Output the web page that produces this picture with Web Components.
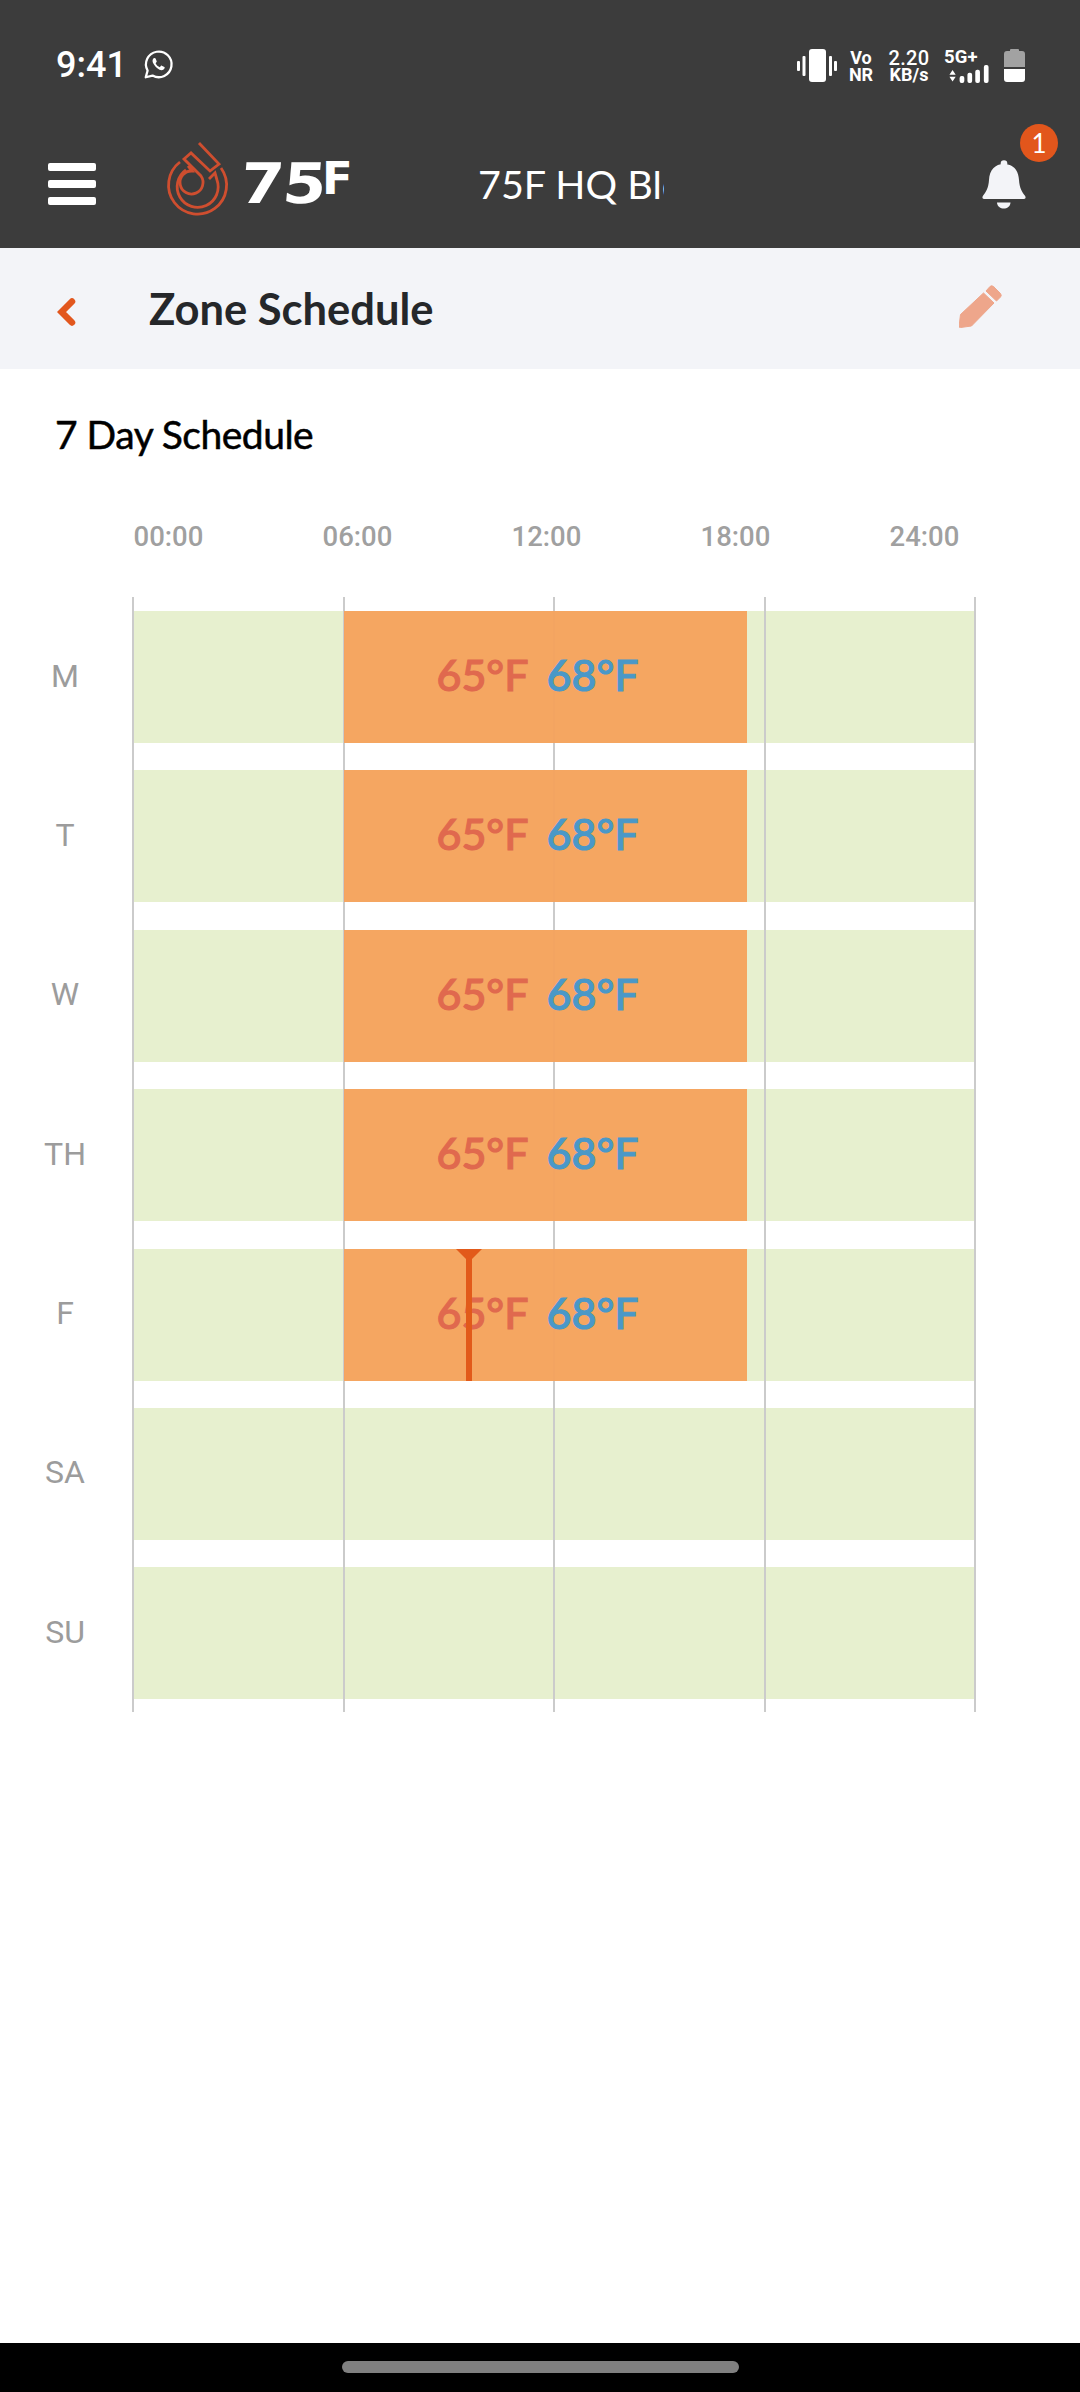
<!DOCTYPE html>
<html lang="en">
<head>
<meta charset="utf-8">
<title>Zone Schedule</title>
<style>
  html, body { margin: 0; padding: 0; background: #fff; }
  body { width: 1080px; height: 2392px; display: flex; flex-direction: column; overflow: hidden; font-family: Lato, sans-serif; }
</style>
</head>
<body>
<zs-status-bar time="9:41"></zs-status-bar>
<zs-app-header building="75F HQ Bldg" alerts="1"></zs-app-header>
<zs-page-title>Zone Schedule</zs-page-title>
<zs-week-schedule heading="7 Day Schedule">
  <zs-day-row day="M" heat="65°F" cool="68°F"></zs-day-row>
  <zs-day-row day="T" heat="65°F" cool="68°F"></zs-day-row>
  <zs-day-row day="W" heat="65°F" cool="68°F"></zs-day-row>
  <zs-day-row day="TH" heat="65°F" cool="68°F"></zs-day-row>
  <zs-day-row day="F" heat="65°F" cool="68°F" now="39.9"></zs-day-row>
  <zs-day-row day="SA"></zs-day-row>
  <zs-day-row day="SU"></zs-day-row>
</zs-week-schedule>
<zs-nav-bar></zs-nav-bar>

<script>
/* Shared base: every element just renders a string into an open shadow root */
class ZsElement extends HTMLElement {
  constructor() {
    super();
    this.attachShadow({ mode: 'open' });
  }
  connectedCallback() { this.shadowRoot.innerHTML = this.render(); }
}

class ZsStatusBar extends ZsElement {
  render() {
    return `<style>
:host { display: flex; flex: none; height: 120px; box-sizing: border-box; padding: 48px 55px 0 56px; background: #3c3c3c; color: #fff; font-family: Roboto, sans-serif; }
.time { font-size: 36px; font-weight: 500; line-height: 34px; width: 86px; }
.wa { width: 32px; height: 32px; margin-top: 1px; }
.right { display: flex; margin-left: auto; height: 34px; margin-top: 1px; }
.stack { display: flex; flex-direction: column; align-items: center; font-weight: 700; justify-content: space-between; }
.vo { width: 26px; margin: 0 15px 0 11px; font-size: 18px; line-height: 17px; }
.speed { width: 40px; margin-right: 15px; }
.speed b { font-size: 20px; line-height: 18px; font-weight: 500; letter-spacing: .4px; }
.speed span { font-size: 18px; line-height: 16px; }
.net { width: 50px; margin-right: 10px; align-items: flex-start; }
.net span { font-size: 18.500px; line-height: 16px; letter-spacing: .2px; }
</style>
<span class="time">${this.getAttribute('time')}</span>
<svg class="wa" viewBox="0 0 24 24" aria-hidden="true"><path d="M2.800 21.200 4.200 16.200A9.600 9.600 0 1 1 7.900 19.900Z" fill="none" stroke="#fff" stroke-width="1.700" stroke-linejoin="round"/><path d="M8.700 6.900c-1.100 1-1.200 2.700.4 5 1.600 2.400 3.600 3.900 5.500 4 1.200 0 2.200-.8 2.400-1.800 0-.3 0-.5-.2-.6l-2-1c-.3-.1-.5 0-.6.1l-.8 1c-1.400-.5-2.600-1.700-3.200-3l.7-.8c.2-.2.2-.4.1-.6l-.8-2c-.2-.5-1-.6-1.500-.3z" fill="#fff"/></svg>
<div class="right">
  <svg width="40" height="34" viewBox="0 0 40 34" aria-hidden="true"><rect x="12" width="17" height="33" rx="3" fill="#fff"/><rect y="12" width="3" height="10" rx="1" fill="#fff"/><rect x="5.500" y="7" width="3" height="20" rx="1" fill="#fff"/><rect x="32" y="7" width="3" height="20" rx="1" fill="#fff"/><rect x="37" y="12" width="3" height="10" rx="1" fill="#fff"/></svg>
  <div class="stack vo"><span>Vo</span><span>NR</span></div>
  <div class="stack speed"><b>2.20</b><span>KB/s</span></div>
  <div class="stack net"><span>5G+</span>
    <svg width="50" height="23" viewBox="0 0 50 23" aria-hidden="true"><path d="M0 10.500 4 4.500l4 6zM0 13h8l-4 6z" transform="translate(0 2)" fill="#fff"/><rect x="13" y="14" width="6" height="9" rx="2.500" fill="#fff"/><rect x="23" y="10" width="6" height="13" rx="2.500" fill="#fff"/><rect x="33" y="6" width="6" height="17" rx="2.500" fill="#fff"/><rect x="44" width="6" height="23" rx="2.500" fill="#fff"/></svg>
  </div>
  <svg width="21" height="34" viewBox="0 0 21 34" aria-hidden="true"><path d="M0 18V5q0-3 3-3h3V1q0-1 1-1h7q1 0 1 1v1h3q3 0 3 3v13z" fill="#a2a2a2"/><path d="M0 20h21v10q0 3-3 3H3q-3 0-3-3z" fill="#fff"/></svg>
</div>`;
  }
}

class ZsAppHeader extends ZsElement {
  render() {
    return `<style>
:host { display: flex; flex: none; align-items: center; height: 128px; box-sizing: border-box; padding: 0 54px 0 48px; background: #3c3c3c; color: #fff; }
.menu { display: flex; flex: none; flex-direction: column; gap: 9px; width: 48px; margin-right: 59px; }
.menu i { display: block; height: 8px; border-radius: 2px; background: #fff; }
.drop { flex: none; width: 75px; height: 90px; margin: -10px 0 0 0; }
.brand { display: flex; flex: none; width: 124px; margin: -1px 0 0 8px; font-family: "DejaVu Sans", sans-serif; font-weight: 700; line-height: 1; white-space: nowrap; }
.brand .n { display: block; font-size: 56px; letter-spacing: -1px; transform: skewX(-5deg) scaleX(1.120); transform-origin: 0 100%; }
.brand .f { display: block; font-size: 45px; margin: 0 0 0 8px; }
.site { flex: none; width: 186px; margin-left: 116px; overflow: hidden; white-space: nowrap; font: 400 39.500px/48px Lato, sans-serif; }
.bell { position: relative; flex: none; margin-left: auto; width: 44px; height: 50px; margin-top: 2px; }
.bell svg { display: block; }
.badge { position: absolute; left: 38px; top: -36px; width: 38px; height: 38px; border-radius: 50%; background: #e2561c; display: flex; align-items: center; justify-content: center; font: 400 26px/1 Lato, sans-serif; color: #fff; }
</style>
<div class="menu" aria-label="Menu"><i></i><i></i><i></i></div>
<svg class="drop" viewBox="0 0 75 90" fill="none" stroke="#cf4e2f" stroke-width="2.800" aria-hidden="true">
  <path d="M25 28A29 29 0 1 0 66 34"/>
  <path d="M31 36A20.500 20.500 0 1 0 62 46L60 39 54 45"/>
  <path d="M44 9 64 30 55 37 36 19 29 25 46 42A11.500 11.500 0 1 1 37 37L33 32"/>
</svg>
<div class="brand"><span class="n">75</span><span class="f">F</span></div>
<div class="site">${this.getAttribute('building')}</div>
<div class="bell">
  <svg width="44" height="50" viewBox="0 0 44 50" fill="#f3f4f8" aria-hidden="true"><circle cx="22" cy="3.500" r="3.300"/><path d="M22 4C13 4 7.500 10 7 20 6.500 28 4 32 .8 36 0 38 .5 39 2 39H42C43.500 39 44 38 43.200 36 40 32 37.500 28 37 20 36.500 10 31 4 22 4Z"/><path d="M15 42.500H28.500C28 50.500 15.500 50.500 15 42.500Z"/></svg>
  <span class="badge">${this.getAttribute('alerts')}</span>
</div>`;
  }
}

class ZsPageTitle extends ZsElement {
  render() {
    return `<style>
:host { display: flex; flex: none; align-items: center; height: 121px; box-sizing: border-box; padding: 0 78px 0 57px; background: #f3f4f8; }
.back { width: 19px; height: 28px; margin: 6px 73px 0 0; }
.title { flex: 1; font: 700 43.500px/50px Lato, sans-serif; color: #25272a; margin-top: -1px; }
.edit { width: 43px; height: 43px; margin-top: -4px; }
</style>
<svg class="back" viewBox="0 0 19 28" aria-hidden="true"><path d="M15 3.500 4.500 14 15 24.500" fill="none" stroke="#e2571e" stroke-width="6.500" stroke-linecap="round" stroke-linejoin="miter"/></svg>
<span class="title"><slot></slot></span>
<svg class="edit" viewBox="0 0 43 43" fill="#eea68b" aria-hidden="true"><path d="M0 42 1.500 29.500 24.500 8 35 18 12.500 41 1.500 42.500Z" stroke="#eea68b" stroke-linejoin="round"/><path d="M27 6 31 1.500Q32.500 0 34.500 1.500L41.500 8.500Q43 10.500 41.500 12L37.500 16Z" stroke="#eea68b" stroke-linejoin="round"/></svg>`;
  }
}

class ZsWeekSchedule extends ZsElement {
  render() {
    const hours = ['00:00', '06:00', '12:00', '18:00', '24:00'];
    return `<style>
:host { display: block; flex: 1; min-height: 0; background: #fff; }
h2 { margin: 0; padding: 42px 0 0 55px; font: 400 39px/46px Lato, sans-serif; color: #000; letter-spacing: -.5px; -webkit-text-stroke: .5px #000; }
.hours { display: flex; margin: 63px 0 0 74px; }
.hours span { width: 189px; text-align: center; font: 500 27.500px/34px Roboto, sans-serif; color: #a0a0a0; }
.plot { position: relative; display: flex; flex-direction: column; gap: 27.400px; margin: 43px 0 0 0; padding: 14px 0 13px; }
.lines { position: absolute; z-index: 1; top: 0; bottom: 0; left: 132px; width: 844px; display: flex; justify-content: space-between; pointer-events: none; }
.lines i { display: block; width: 2px; background: #cbcbcb; }
</style>
<h2>${this.getAttribute('heading')}</h2>
<div class="hours">${hours.map((h) => `<span>${h}</span>`).join('')}</div>
<div class="plot">
  <div class="lines"><i></i><i></i><i></i><i></i><i></i></div>
  <slot></slot>
</div>`;
  }
}

class ZsDayRow extends ZsElement {
  render() {
    const heat = this.getAttribute('heat');
    const cool = this.getAttribute('cool');
    const now = this.getAttribute('now');
    const marker = now ? `<div class="now" style="left:${now}%"></div>` : '';
    const bar = heat ? `<div class="gap"></div><div class="bar"><span class="heat">${heat}</span><span class="cool">${cool}</span></div>` : '';
    return `<style>
:host { display: flex; height: 132px; }
.day { width: 130px; box-sizing: border-box; padding-bottom: 3px; display: flex; align-items: center; justify-content: center; font: 400 32px/1 Roboto, sans-serif; color: #9c9c9c; }
.track { position: relative; display: flex; width: 842px; margin-left: 3px; background: #e7f0cf; }
.gap { flex: 0 0 211px; }
.bar { position: relative; z-index: 2; flex: 0 0 403px; display: flex; align-items: center; justify-content: center; gap: 18px; box-sizing: border-box; padding: 0 16px 5px 0; background: rgba(245,160,88,.93); font: 500 43px/1 Lato, sans-serif; -webkit-text-stroke: 1.100px; }
.heat { color: #e0694e; -webkit-text-stroke-color: #e0694e; }
.cool { color: #4a98c8; -webkit-text-stroke-color: #4a98c8; }
.now { position: absolute; z-index: 3; top: 0; bottom: 0; width: 6px; background: #e25a1a; transform: translateX(-3px); }
.now::before { content: ""; position: absolute; top: 0; left: -10px; border: 13px solid transparent; border-bottom: 0; border-top-color: #e25a1a; }
</style>
<div class="day">${this.getAttribute('day')}</div>
<div class="track">${bar}${marker}</div>`;
  }
}

class ZsNavBar extends ZsElement {
  render() {
    return `<style>
:host { display: flex; flex: none; height: 49px; align-items: flex-start; justify-content: center; background: #000; }
i { display: block; width: 397px; height: 12px; margin-top: 18px; border-radius: 6px; background: #808080; }
</style><i></i>`;
  }
}

customElements.define('zs-status-bar', ZsStatusBar);
customElements.define('zs-app-header', ZsAppHeader);
customElements.define('zs-page-title', ZsPageTitle);
customElements.define('zs-week-schedule', ZsWeekSchedule);
customElements.define('zs-day-row', ZsDayRow);
customElements.define('zs-nav-bar', ZsNavBar);
</script>
</body>
</html>
